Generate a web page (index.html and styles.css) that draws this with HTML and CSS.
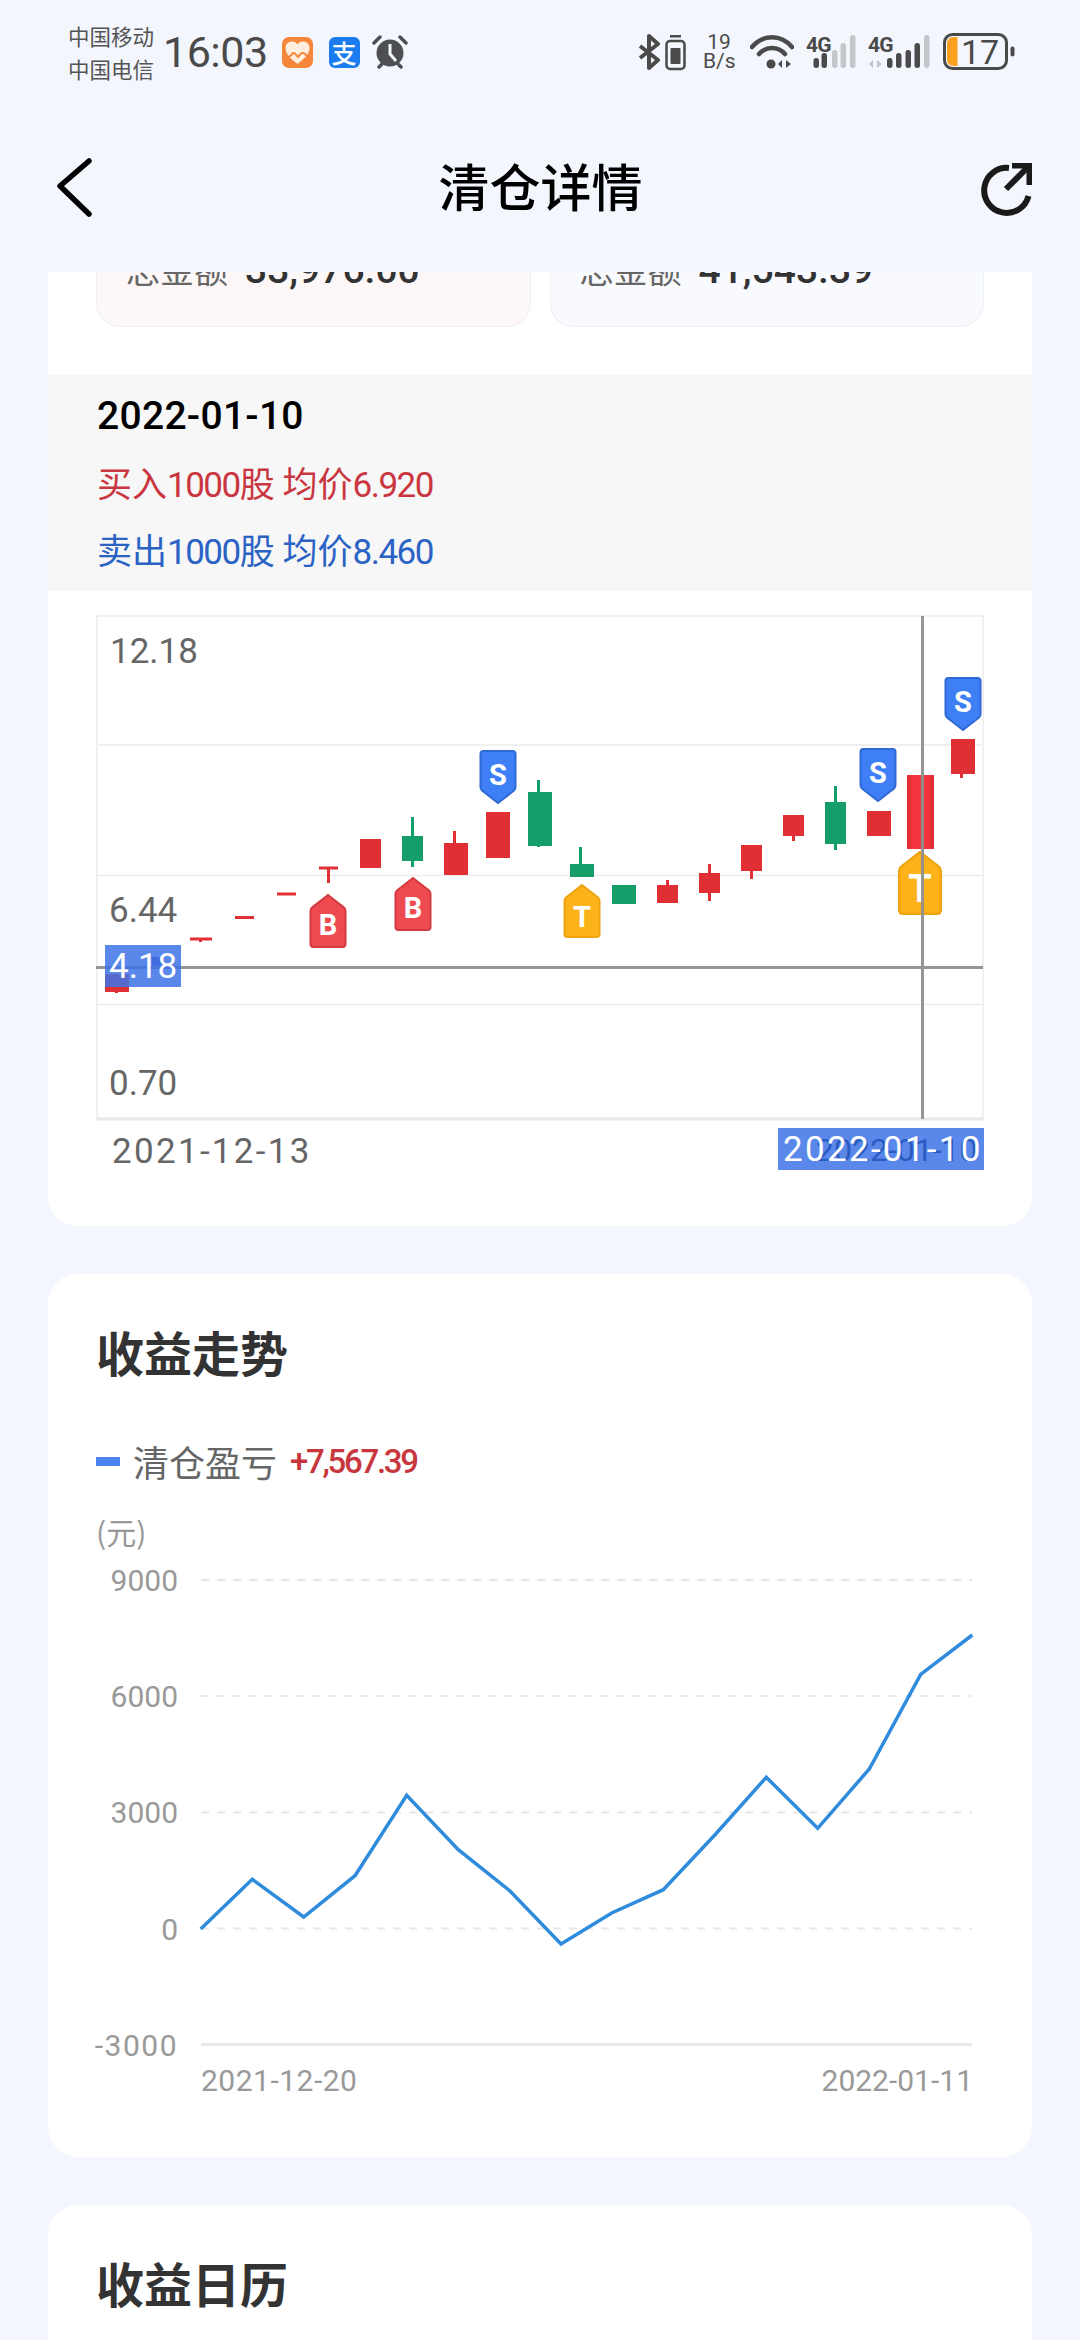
FILE: index.html
```html
<!DOCTYPE html>
<html lang="zh-CN">
<head>
    <meta charset="UTF-8">
    <meta name="viewport" content="width=device-width, initial-scale=1.0">
    <title>清仓详情</title>
    <link rel="stylesheet" href="styles.css">
</head>
<body>
    <div class="phone">
        <div class="status-bar">
            <div class="status-left">
                <div class="carrier">
                    <span>中国移动</span>
                    <span>中国电信</span>
                </div>
                <span class="clock">16:03</span>
                <svg class="app-icon" viewBox="0 0 31 31">
                    <rect width="31" height="31" rx="7" fill="#f5863a"/>
                    <path d="M15.5 27 C9 22 3.500 17 3.500 11 C3.500 6.500 7 4.500 10.500 4.500 C12.800 4.500 14.500 5.800 15.500 7.500 C16.500 5.800 18.200 4.500 20.500 4.500 C24 4.500 27.500 6.500 27.500 11 C27.500 17 22 22 15.500 27 Z" fill="#fdeede"/>
                    <path d="M0 20 C5 21 8 20 10 17 C12 14 14 18 16 20 C18 18 20 14 23 17 C25 20 28 20 31 20" fill="none" stroke="#f5863a" stroke-width="2"/>
                </svg>
                <div class="alipay">支</div>
                <svg class="alarm-icon" viewBox="0 0 36 34">
                    <circle cx="18" cy="18" r="13.500" fill="#4d4f52"/>
                    <path d="M18 9 V19 L24 26" fill="none" stroke="#f3f6fd" stroke-width="3"/>
                    <path d="M2 8 L8 2 M34 8 L28 2" stroke="#4d4f52" stroke-width="3.500" stroke-linecap="round"/>
                    <path d="M7 32 L10 29 M29 32 L26 29" stroke="#4d4f52" stroke-width="3.500" stroke-linecap="round"/>
                </svg>
            </div>
            <div class="status-right">
                <svg class="st-btsim" viewBox="638 32 53 40">
                    <path d="M640 46 L658 60 L649 68 V36 L658 44 L640 58" fill="none" stroke="#4a4a4a" stroke-width="4" stroke-linejoin="round"/>
                    <rect x="666.500" y="41" width="18" height="28" rx="3.500" fill="none" stroke="#4a4a4a" stroke-width="2.500"/>
                    <rect x="670.500" y="48" width="10" height="16" rx="1" fill="#4a4a4a"/>
                    <rect x="670" y="35" width="11" height="2.500" fill="#4a4a4a"/>
                </svg>
                <div class="st-net">
                    <span>19</span>
                    <span>B/s</span>
                </div>
                <svg class="st-wifi" viewBox="750 32 44 40">
                    <path d="M752 47 C763 34 781 34 792 47" fill="none" stroke="#4a4a4a" stroke-width="4.500" stroke-linecap="round"/>
                    <path d="M759 54 C766 46 778 46 785 54" fill="none" stroke="#4a4a4a" stroke-width="4.500" stroke-linecap="round"/>
                    <circle cx="771" cy="64" r="4.500" fill="#4a4a4a"/>
                    <path d="M782 60 V68 L778 64 Z M786 60 V68 L791 64 Z" fill="#4a4a4a"/>
                </svg>
                <svg class="st-sig1" viewBox="806 32 50 40">
                    <text class="sig-text" x="806" y="52">4G</text>
                    <rect x="813.500" y="58" width="5.500" height="10" rx="2.700" fill="#4a4a4a"/>
                    <rect x="821.500" y="53" width="5.500" height="15" rx="2.700" fill="#4a4a4a"/>
                    <rect x="832" y="50" width="5.500" height="18" rx="2.700" fill="#c4c6c9"/>
                    <rect x="840.500" y="43" width="5.500" height="25" rx="2.700" fill="#c4c6c9"/>
                    <rect x="850" y="35" width="5.500" height="33" rx="2.700" fill="#c4c6c9"/>
                </svg>
                <svg class="st-sig2" viewBox="868 32 62 40">
                    <text class="sig-text" x="868" y="52">4G</text>
                    <path d="M873 60 V68 L869 64 Z M877 60 V68 L882 64 Z" fill="#c4c6c9"/>
                    <rect x="887" y="58" width="5.500" height="10" rx="2.700" fill="#4a4a4a"/>
                    <rect x="896" y="53" width="5.500" height="15" rx="2.700" fill="#4a4a4a"/>
                    <rect x="905.500" y="50" width="5.500" height="18" rx="2.700" fill="#4a4a4a"/>
                    <rect x="914.500" y="43" width="5.500" height="25" rx="2.700" fill="#4a4a4a"/>
                    <rect x="924" y="35" width="5.500" height="33" rx="2.700" fill="#c4c6c9"/>
                </svg>
                <svg class="st-batt" viewBox="942 32 73 40">
                    <rect x="944.500" y="34.500" width="62" height="34" rx="8" fill="none" stroke="#4a4a4a" stroke-width="3"/>
                    <path d="M954 37 H957.500 V66 H954 Q947 66 947 59 V44 Q947 37 954 37 Z" fill="#f9a01e"/>
                    <text class="batt-text" x="961" y="64">17</text>
                    <rect x="1010.500" y="46.500" width="4" height="10" rx="2" fill="#4a4a4a"/>
                </svg>
            </div>
        </div>

        <div class="nav-bar">
            <svg class="nav-back" viewBox="0 0 36 60">
                <path d="M33 3 L4 28 L33 56" fill="none" stroke="#000" stroke-width="5.500" stroke-linecap="round" stroke-linejoin="round"/>
            </svg>
            <h1 class="nav-title">清仓详情</h1>
            <svg class="nav-share" viewBox="981 161 53 56">
                <path d="M1009 168 A22.500 22.500 0 1 0 1028.500 196" fill="none" stroke="#1a1a1a" stroke-width="6"/>
                <path d="M1006 189 L1028 167" fill="none" stroke="#1a1a1a" stroke-width="6"/>
                <path d="M1012 163 H1032 V185 H1026.500 V168.500 H1012 Z" fill="#1a1a1a"/>
            </svg>
        </div>

        <div class="content">
            <section class="card card-top">
                <div class="summary-row">
                    <div class="summary-box buy">
                        <span class="summary-label">总金额</span>
                        <span class="summary-value">33,976.00</span>
                    </div>
                    <div class="summary-box sell">
                        <span class="summary-label">总金额</span>
                        <span class="summary-value">41,543.39</span>
                    </div>
                </div>

                <div class="trade-info">
                    <div class="trade-date">2022-01-10</div>
                    <div class="trade-line red">买入<span class="num">1000</span>股 均价<span class="num">6.920</span></div>
                    <div class="trade-line blue">卖出<span class="num">1000</span>股 均价<span class="num">8.460</span></div>
                </div>

                <svg class="kline" viewBox="48 591 984 635">
                    <rect class="grid" x="97" y="616" width="886" height="503"/>
                    <path class="grid" d="M97 745 H983 M97 875.500 H983 M97 1004.500 H983"/>
                    <path class="grid-strong" d="M97 1119 H983"/>

                    <text class="k-axis" x="110" y="663">12.18</text>
                    <text class="k-axis" x="109" y="922">6.44</text>
                    <text class="k-axis" x="109" y="1095">0.70</text>
                    <text class="k-axis k-date" x="112" y="1163">2021-12-13</text>

                    <g class="up">
                        <rect x="105" y="974" width="24" height="18"/>
                        <rect x="115" y="990" width="3" height="3"/>
                        <rect x="190" y="937.500" width="22" height="3"/>
                        <rect x="199" y="939" width="3" height="3"/>
                        <rect x="235" y="916" width="19" height="3"/>
                        <rect x="277" y="892.500" width="19" height="3"/>
                        <rect x="319" y="866.500" width="19" height="3"/>
                        <rect x="327" y="868" width="3" height="15"/>
                        <rect x="360" y="839" width="21" height="29"/>
                        <rect x="444" y="843" width="24" height="32"/>
                        <rect x="453" y="831" width="3" height="12"/>
                        <rect x="486" y="812" width="24" height="46"/>
                        <rect x="657" y="885" width="21" height="18"/>
                        <rect x="666" y="880" width="3" height="5"/>
                        <rect x="699" y="873" width="21" height="20"/>
                        <rect x="708" y="864" width="3" height="37"/>
                        <rect x="741" y="845" width="21" height="26"/>
                        <rect x="750" y="871" width="3" height="8"/>
                        <rect x="783" y="815" width="21" height="21"/>
                        <rect x="792" y="836" width="3" height="5"/>
                        <rect x="867" y="811" width="24" height="25"/>
                        <rect x="951" y="739" width="24" height="35"/>
                        <rect x="960" y="774" width="3" height="4"/>
                    </g>
                    <g class="down">
                        <rect x="402" y="836" width="21" height="25"/>
                        <rect x="411" y="817" width="3" height="50"/>
                        <rect x="528" y="792" width="24" height="54"/>
                        <rect x="537" y="780" width="3" height="67"/>
                        <rect x="570" y="864" width="24" height="13"/>
                        <rect x="579" y="847" width="3" height="17"/>
                        <rect x="612" y="885" width="24" height="19"/>
                        <rect x="825" y="802" width="21" height="42"/>
                        <rect x="834" y="786" width="3" height="64"/>
                    </g>
                    <rect class="up" x="907" y="775" width="27" height="74"/>
                    <rect class="up-active" x="911" y="775" width="19" height="74"/>

                    <path class="mark-b" transform="translate(328 895)" d="M0 0 L16 12.500 Q17.500 14 17.500 16 V49 Q17.500 52 14.500 52 H-14.500 Q-17.500 52 -17.500 49 V16 Q-17.500 14 -16 12.500 Z"/>
                    <path class="mark-b" transform="translate(413 878)" d="M0 0 L16 12.500 Q17.500 14 17.500 16 V49 Q17.500 52 14.500 52 H-14.500 Q-17.500 52 -17.500 49 V16 Q-17.500 14 -16 12.500 Z"/>
                    <path class="mark-t" transform="translate(582 885)" d="M0 0 L16 12.500 Q17.500 14 17.500 16 V49 Q17.500 52 14.500 52 H-14.500 Q-17.500 52 -17.500 49 V16 Q-17.500 14 -16 12.500 Z"/>
                    <path class="mark-t" transform="translate(920 852) scale(1.190)" d="M0 0 L16 12.500 Q17.500 14 17.500 16 V49 Q17.500 52 14.500 52 H-14.500 Q-17.500 52 -17.500 49 V16 Q-17.500 14 -16 12.500 Z"/>
                    <path class="mark-s" transform="translate(498 803)" d="M0 0 L16 -12.500 Q17.500 -14 17.500 -16 V-49 Q17.500 -52 14.500 -52 H-14.500 Q-17.500 -52 -17.500 -49 V-16 Q-17.500 -14 -16 -12.500 Z"/>
                    <path class="mark-s" transform="translate(878 801)" d="M0 0 L16 -12.500 Q17.500 -14 17.500 -16 V-49 Q17.500 -52 14.500 -52 H-14.500 Q-17.500 -52 -17.500 -49 V-16 Q-17.500 -14 -16 -12.500 Z"/>
                    <path class="mark-s" transform="translate(963 730)" d="M0 0 L16 -12.500 Q17.500 -14 17.500 -16 V-49 Q17.500 -52 14.500 -52 H-14.500 Q-17.500 -52 -17.500 -49 V-16 Q-17.500 -14 -16 -12.500 Z"/>
                    <text class="mark-text" x="328" y="935">B</text>
                    <text class="mark-text" x="413" y="918">B</text>
                    <text class="mark-text" x="498" y="785">S</text>
                    <text class="mark-text" x="582" y="927">T</text>
                    <text class="mark-text" x="878" y="783">S</text>
                    <text class="mark-text" x="963" y="712">S</text>
                    <text class="mark-text big" x="920" y="902">T</text>

                    <rect class="ghost" x="152" y="957" width="9" height="10"/>
                    <path class="cross" d="M96 967.500 H983 M922.500 616 V1119"/>
                    <rect class="cross-label" x="105" y="945" width="76" height="42"/>
                    <text class="cross-text" x="109" y="978">4.18</text>
                    <rect class="date-label" x="778" y="1128" width="206" height="42"/>
                    <text class="date-ghost" x="816" y="1161">2022-01-10</text>
                    <text class="cross-text k-date" x="783" y="1161">2022-01-10</text>
                </svg>
            </section>

            <section class="card">
                <h2 class="card-title">收益走势</h2>
                <div class="legend">
                    <span class="legend-mark"></span>
                    <span class="legend-name">清仓盈亏</span>
                    <span class="legend-value">+7,567.39</span>
                </div>
                <svg class="trend" viewBox="48 1487 984 671">
                    <text class="t-unit" x="96" y="1545">(元)</text>
                    <path class="t-dash" d="M201 1581 H972 M201 1697 H972 M201 1813.500 H972 M201 1929.500 H972"/>
                    <path class="t-base" d="M201 2045.500 H972"/>
                    <text class="t-axis end" x="178" y="1592">9000</text>
                    <text class="t-axis end" x="178" y="1708">6000</text>
                    <text class="t-axis end" x="178" y="1824">3000</text>
                    <text class="t-axis end" x="178" y="1941">0</text>
                    <text class="t-axis end neg" x="178" y="2057">-3000</text>
                    <text class="t-axis t-date" x="201" y="2092">2021-12-20</text>
                    <text class="t-axis end" x="973" y="2092">2022-01-11</text>
                    <polyline class="t-line" points="200.700,1930 252.300,1880.300 303.700,1918 355,1876.700 406.700,1796.300 458.300,1850.700 510,1892 561,1945 611.700,1914 663.300,1890.700 715,1835.700 766.300,1778.300 817.700,1829.300 869.300,1770 920.700,1675.300 972.300,1636"/>
                </svg>
            </section>

            <section class="card">
                <h2 class="card-title">收益日历</h2>
            </section>
        </div>
    </div>
</body>
</html>
```

FILE: styles.css
```css
body {
    margin: 0;
    padding: 0;
    background-color: #f3f6fd;
    font-family: "Noto Sans CJK SC", sans-serif;
}
.phone {
    width: 1080px;
    height: 2340px;
    overflow: hidden;
    display: flex;
    flex-direction: column;
}

/* Status bar */
.status-bar {
    height: 96px;
    box-sizing: border-box;
    padding: 8px 65px 0 68px;
    display: flex;
    justify-content: space-between;
    align-items: center;
    flex-shrink: 0;
}
.status-left,
.status-right {
    display: flex;
    align-items: center;
}
.status-right {
    gap: 12px;
}
.carrier {
    display: flex;
    flex-direction: column;
    width: 85px;
    font-size: 21.5px;
    line-height: 33px;
    color: #555;
    white-space: nowrap;
}
.clock {
    margin-left: 10px;
    font-family: Roboto, sans-serif;
    font-size: 43px;
    letter-spacing: -0.5px;
    color: #4a4a4a;
}
.app-icon {
    width: 31px;
    height: 31px;
    margin-left: 14px;
}
.alipay {
    width: 31px;
    height: 31px;
    margin-left: 16px;
    border-radius: 6px;
    background-color: #1b7cf0;
    color: white;
    font-size: 25px;
    font-weight: 500;
    line-height: 30px;
    text-align: center;
}
.alarm-icon {
    width: 36px;
    height: 34px;
    margin-left: 12px;
}
.st-btsim { width: 53px; height: 40px; }
.st-wifi { width: 44px; height: 40px; }
.st-sig1 { width: 50px; height: 40px; }
.st-sig2 { width: 62px; height: 40px; }
.st-batt { width: 73px; height: 40px; }
.st-net {
    width: 35px;
    display: flex;
    flex-direction: column;
    font-family: Roboto, sans-serif;
    font-size: 21px;
    line-height: 19px;
    color: #4a4a4a;
}
.st-net span:first-child {
    text-align: center;
    width: 32px;
}
.sig-text {
    font-family: Roboto, sans-serif;
    font-size: 21px;
    font-weight: 700;
    letter-spacing: -0.8px;
    fill: #4a4a4a;
}
.batt-text {
    font-family: Roboto, sans-serif;
    font-size: 34px;
    fill: #4a4a4a;
}

/* Title bar */
.nav-bar {
    height: 176px;
    flex-shrink: 0;
    display: flex;
    align-items: center;
    justify-content: space-between;
    padding: 0 48px 0 56px;
    box-sizing: border-box;
}
.nav-back {
    width: 36px;
    height: 60px;
    margin-top: 8px;
}
.nav-title {
    margin: 2px 0 0 8px;
    font-size: 51px;
    font-weight: 500;
    line-height: 60px;
    color: #000;
}
.nav-share {
    width: 53px;
    height: 56px;
    margin-top: 9px;
    margin-right: -2px;
}

/* Cards */
.content {
    flex: 1;
    overflow: hidden;
    padding: 0 48px;
    display: flex;
    flex-direction: column;
    gap: 48px;
}
.card {
    background: white;
    border-radius: 30px;
    flex-shrink: 0;
}
.card:last-child {
    flex: 1;
    border-radius: 30px 30px 0 0;
}
.card-top {
    border-radius: 0 0 30px 30px;
}
.card-title {
    margin: 0;
    padding: 47px 48px 0;
    font-size: 48px;
    font-weight: 700;
    line-height: 60px;
    color: #333;
}

/* Buy and sell totals, scrolled mostly under the title bar */
.summary-row {
    height: 55px;
    padding: 0 48px;
    display: flex;
    gap: 19px;
    overflow: hidden;
}
.summary-box {
    flex: 1;
    height: 55px;
    box-sizing: border-box;
    padding-left: 29px;
    border-radius: 0 0 24px 24px;
    border: 1px solid #f1efef;
    border-top: none;
    white-space: nowrap;
    display: flex;
    align-items: baseline;
    gap: 17px;
    line-height: 20px;
}
.summary-box.buy {
    background-color: #fdf8f7;
}
.summary-box.sell {
    background-color: #f9fafe;
    border-color: #eceff5;
}
.summary-label {
    font-size: 34px;
    color: #666;
    margin-top: -13px;
}
.summary-value {
    font-family: Roboto, sans-serif;
    font-size: 39px;
    font-weight: 500;
    color: #333;
    margin-top: -13px;
}

/* Selected day */
.trade-info {
    margin-top: 48px;
    height: 216px;
    box-sizing: border-box;
    padding: 8px 49px 0;
    background-color: #f7f7f7;
}
.trade-date {
    font-family: Roboto, sans-serif;
    font-size: 39px;
    font-weight: 500;
    letter-spacing: 0.3px;
    line-height: 66px;
    color: #000;
}
.trade-line {
    font-size: 35px;
    line-height: 66px;
}
.trade-line.red {
    color: #c9363f;
}
.trade-line.blue {
    color: #2a63c4;
    margin-top: -3px;
}
.num {
    font-family: Roboto, sans-serif;
    letter-spacing: -1.5px;
}

/* Candlestick chart */
.kline,
.trend {
    display: block;
    width: 984px;
}
.kline {
    height: 635px;
}
.trend {
    height: 671px;
}
.grid {
    fill: none;
    stroke: #ececec;
    stroke-width: 1.500;
}
.grid-strong {
    fill: none;
    stroke: #e8e8e8;
    stroke-width: 3;
}
.k-axis {
    font-family: Roboto, sans-serif;
    font-size: 35px;
    fill: #666;
}
.k-date {
    letter-spacing: 2.300px;
}
.up {
    fill: #e03035;
}
.up-active {
    fill: #f2353c;
}
.down {
    fill: #159e6a;
}
.mark-b {
    fill: #ee4b50;
    stroke: #d33a40;
    stroke-width: 2;
}
.mark-s {
    fill: #3f7ff5;
    stroke: #2f69d4;
    stroke-width: 2;
}
.mark-t {
    fill: #fbb319;
    stroke: #efa40f;
    stroke-width: 2;
}
.mark-text {
    font-family: Roboto, sans-serif;
    font-size: 29px;
    font-weight: 700;
    fill: white;
    text-anchor: middle;
}
.mark-text.big {
    font-size: 38px;
}
.ghost {
    fill: #4a4ab8;
}
.cross {
    fill: none;
    stroke: #8f8f8f;
    stroke-width: 3;
    opacity: 0.95;
}
.cross-label,
.date-label {
    fill: #3d73e6;
    fill-opacity: 0.85;
}
.cross-text {
    font-family: Roboto, sans-serif;
    font-size: 35px;
    fill: white;
}
.date-ghost {
    font-family: Roboto, sans-serif;
    font-size: 32px;
    fill: #2a5bc0;
}

/* Profit trend */
.legend {
    margin-top: 55px;
    padding-left: 48px;
    height: 50px;
    display: flex;
    align-items: center;
}
.legend-mark {
    width: 24px;
    height: 9px;
    background-color: #4a82f0;
}
.legend-name {
    margin-left: 13px;
    font-size: 36px;
    color: #666;
}
.legend-value {
    margin-left: 13px;
    font-family: Roboto, sans-serif;
    font-size: 33px;
    font-weight: 500;
    letter-spacing: -2.3px;
    color: #c8363e;
}
.t-unit {
    font-size: 30px;
    fill: #999;
}
.t-axis {
    font-family: Roboto, sans-serif;
    font-size: 30px;
    fill: #999;
}
.t-axis.end {
    text-anchor: end;
}
.t-axis.neg {
    letter-spacing: 1.5px;
}
.t-date {
    letter-spacing: 0.5px;
}
.t-dash {
    fill: none;
    stroke: #e8e8e8;
    stroke-width: 2;
    stroke-dasharray: 8 8;
}
.t-base {
    fill: none;
    stroke: #e8e8e8;
    stroke-width: 3;
}
.t-line {
    fill: none;
    stroke: #2f8bdc;
    stroke-width: 3.500;
}
```
